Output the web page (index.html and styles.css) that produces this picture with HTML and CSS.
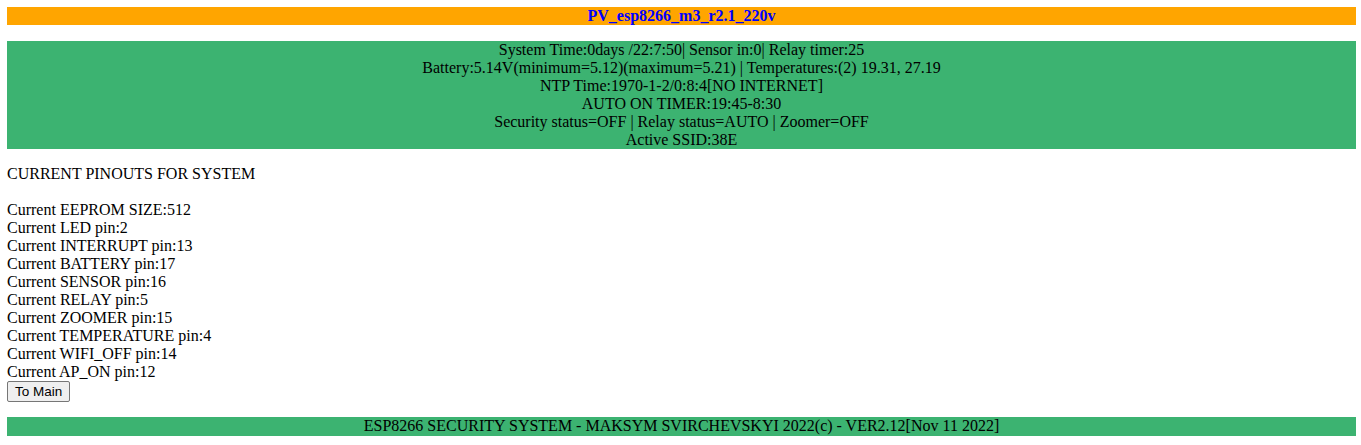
FILE: index.html
```html
<!DOCTYPE html>
<html>
<head>
<meta charset="utf-8">
<link rel="stylesheet" href="styles.css">
</head>
<body>
<div class="title-bar"><b>PV_esp8266_m3_r2.1_220v</b></div>
<div class="status">
  <div>System Time:0days /22:7:50| Sensor in:0| Relay timer:25</div>
  <div>Battery:5.14V(minimum=5.12)(maximum=5.21) | Temperatures:(2) 19.31, 27.19</div>
  <div>NTP Time:1970-1-2/0:8:4[NO INTERNET]</div>
  <div>AUTO ON TIMER:19:45-8:30</div>
  <div>Security status=OFF | Relay status=AUTO | Zoomer=OFF</div>
  <div>Active SSID:38E</div>
</div>
<div class="pinouts">
  <div class="heading">CURRENT PINOUTS FOR SYSTEM</div>
  <div>Current EEPROM SIZE:512</div>
  <div>Current LED pin:2</div>
  <div>Current INTERRUPT pin:13</div>
  <div>Current BATTERY pin:17</div>
  <div>Current SENSOR pin:16</div>
  <div>Current RELAY pin:5</div>
  <div>Current ZOOMER pin:15</div>
  <div>Current TEMPERATURE pin:4</div>
  <div>Current WIFI_OFF pin:14</div>
  <div>Current AP_ON pin:12</div>
  <button class="btn">To Main</button>
</div>
<div class="footer">ESP8266 SECURITY SYSTEM - MAKSYM SVIRCHEVSKYI 2022(c) - VER2.12[Nov 11 2022]</div>
</body>
</html>
```
FILE: styles.css
```css
html, body {
  background: #ffffff;
}
body {
  margin: 7px 5px 0 7px;
  font-family: "Liberation Serif", "Times New Roman", serif;
  font-size: 16px;
  line-height: 18px;
  color: #000;
}
.title-bar {
  background: #ffa500;
  color: #0000ff;
  text-align: center;
  height: 18px;
}
.status {
  margin-top: 16px;
  background: #3cb371;
  text-align: center;
}
.pinouts {
  margin-top: 16px;
}
.heading {
  margin-bottom: 18px;
}
.btn {
  display: block;
  margin: 0;
  font-family: "Liberation Sans", Arial, sans-serif;
  font-size: 13.5px;
  line-height: 15px;
  padding: 1px 7px;
  height: 21px;
  border: 1px solid #767676;
  border-radius: 2px;
  background: #efefef;
  color: #000;
}
.footer {
  margin-top: 15px;
  background: #3cb371;
  text-align: center;
  height: 19px;
}
```
